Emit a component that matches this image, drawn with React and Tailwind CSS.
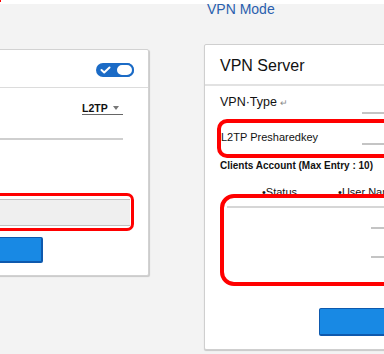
import React from 'react';

const Toggle = () => (
  <div className="relative w-[38px] h-[14px] rounded-full bg-[#1b6bc6]">
    <svg className="absolute left-[4px] top-[3px]" width="11" height="8" viewBox="0 0 11 8">
      <path d="M1.5 4 L4.2 6.5 L9.5 1.5" fill="none" stroke="#fff" strokeWidth="2" strokeLinecap="round" strokeLinejoin="round" />
    </svg>
    <div className="absolute right-0 top-0 w-[19px] h-[14px] rounded-full bg-white border-2 border-[#1b6bc6]" />
  </div>
);

const Field = ({ className }) => (
  <div className={`flex-1 border-b-2 border-[#c4c4c4] ${className || ''}`} />
);

const BlueButton = ({ className }) => (
  <div className={`bg-[#1889e4] border border-[#0e59ad] border-r-2 border-b-2 rounded-[2px] ${className}`} />
);

export default function App() {
  return (
    <div className="relative w-[384px] h-[354px] overflow-hidden bg-[#f3f3f3] font-['Liberation_Sans',Arial,sans-serif]">
      <div className="h-[4px] bg-white">
        <div className="w-[1px] h-[2px] bg-[#ff0000]" />
      </div>
      <div className="-mt-[2px] pl-[207px] text-[14px] leading-[15px] text-[#2a60ae]">VPN Mode</div>

      <div className="flex items-start">
        {/* left card */}
        <div className="-ml-[51px] mt-[32px] w-[200px] h-[227px] bg-white border border-[#d2d2d2] rounded-[2px] shadow-[1px_1px_1px_rgba(0,0,0,0.18)] shrink-0">
          <div className="h-[38px] flex items-center justify-end pr-[14px] pt-[2px] border-b border-[#dcdcdc]">
            <Toggle />
          </div>
          <div className="pr-[25px] pt-[12px]">
            <div className="flex justify-end">
              <div className="w-[41px] h-[15px] flex items-end border-b border-[#666]">
                <span className="text-[10.5px] leading-[12px] font-bold text-[#111]">L2TP</span>
                <div className="ml-[5px] mb-[4px] w-0 h-0 border-l-[3px] border-r-[3px] border-t-[4px] border-l-transparent border-r-transparent border-t-[#777]" />
              </div>
            </div>
            <div className="mt-[2px] h-[23px] border-b-2 border-[#cfcfcf]" />
          </div>
          <div className="pr-[18px] mt-[59px]">
            <div className="h-[27px] bg-[#efefef] border-y border-[#c2c2c2]" />
          </div>
          <BlueButton className="mt-[11px] ml-[16px] w-[77px] h-[26px]" />
        </div>

        {/* right card */}
        <div className="ml-[55px] mt-[27px] w-[240px] h-[306px] bg-white border border-[#cfcfcf] rounded-[2px] shadow-[0_1px_1px_rgba(0,0,0,0.18)] shrink-0">
          <div className="h-[41px] pt-[12px] pl-[15px] border-b-2 border-[#e2e2e2]">
            <div className="text-[16px] leading-[18px] text-[#111]">VPN Server</div>
          </div>
          <div className="pt-[9px] pl-[15px] flex items-end h-[28px]">
            <div className="w-[142px] text-[12.5px] leading-[15px] text-[#111] self-start">
              VPN·Type <span className="text-[9px] text-[#888]">↵</span>
            </div>
            <Field className="h-[19px]" />
          </div>
          <div className="mt-[17px] pl-[16px] flex items-end h-[14px]">
            <div className="w-[141px] text-[11px] leading-[13px] text-[#111] self-start">L2TP Presharedkey</div>
            <Field className="h-[14px]" />
          </div>
          <div className="mt-[15px] pl-[15px] text-[10px] leading-[12px] font-bold text-[#111]">
            Clients Account (Max Entry : 10)
          </div>
          <div className="mt-[14px] pl-[57px] flex gap-[41px] text-[11px] leading-[13px] text-[#111] whitespace-nowrap">
            <span>•Status</span>
            <span>•User Name</span>
          </div>
          <div className="mt-[7px] ml-[22px] border-t-2 border-[#d6d6d6]">
            <div className="flex h-[21px]">
              <div className="w-[144px]" />
              <Field />
            </div>
            <div className="flex h-[21px] mt-[8px]">
              <div className="w-[144px]" />
              <Field />
            </div>
          </div>
          <BlueButton className="mt-[50px] ml-[114px] w-[110px] h-[28px]" />
        </div>
      </div>

      {/* annotation boxes */}
      <div className="absolute left-[-10px] top-[193px] w-[144px] h-[38px] border-[3px] border-[#ff0000] rounded-[7px]" />
      <div className="absolute left-[217px] top-[119px] w-[190px] h-[39px] border-4 border-[#ff0000] rounded-[10px]" />
      <div className="absolute left-[220px] top-[194px] w-[190px] h-[92px] border-4 border-[#ff0000] rounded-[14px]" />
    </div>
  );
}
